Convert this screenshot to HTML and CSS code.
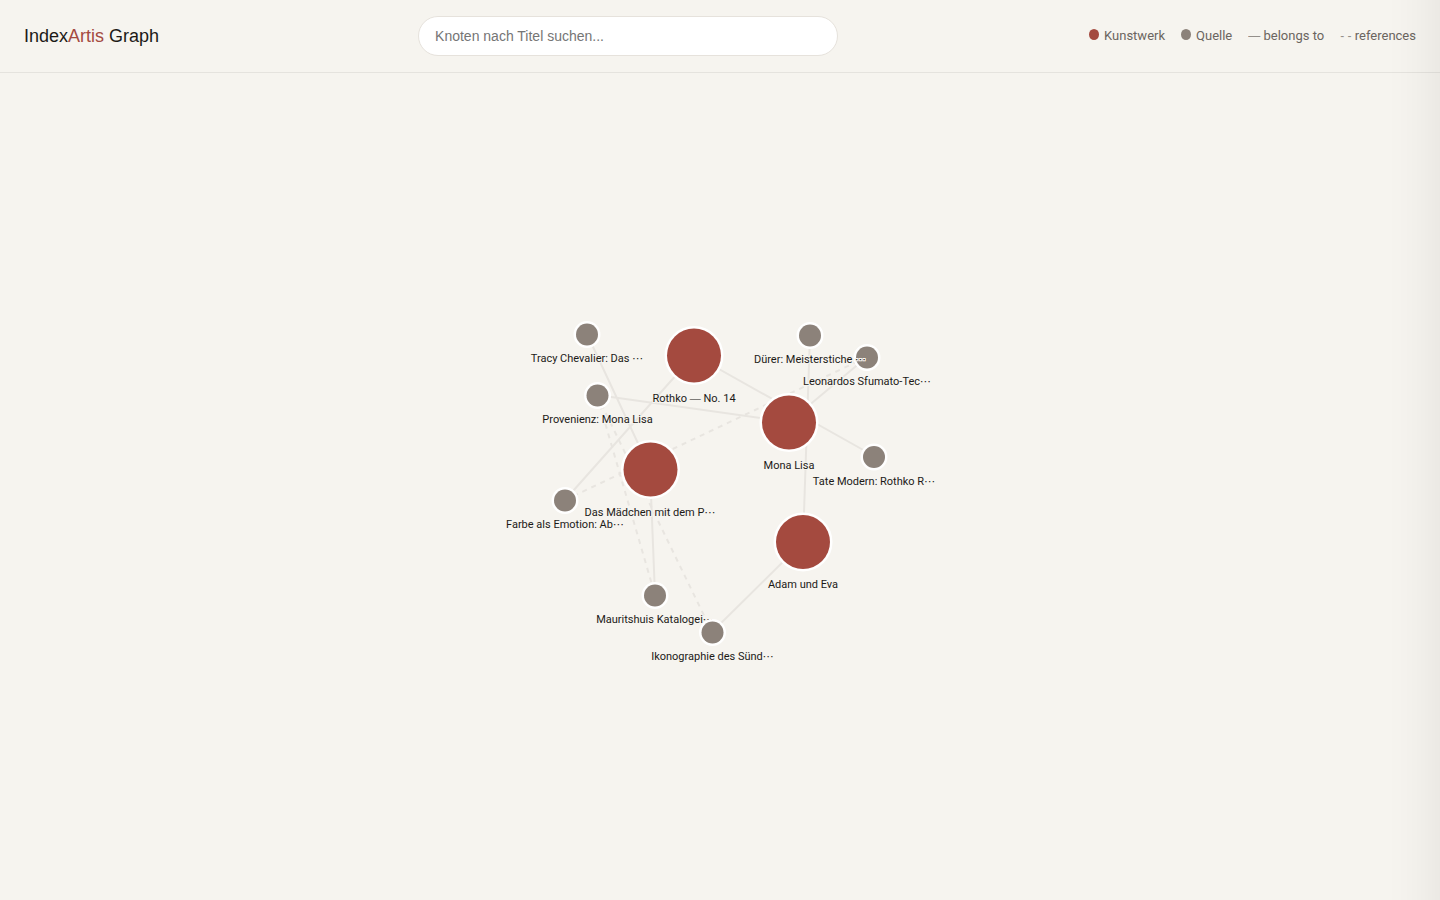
FILE: index.html
```html
<!DOCTYPE html>
<html lang="de">
<head>
<meta charset="utf-8">
<title>IndexArtis Graph</title>
<link rel="stylesheet" href="styles.css">
</head>
<body>
<header class="topbar">
  <h1 class="brand">Index<span class="brand-accent">Artis</span> Graph</h1>
  <input class="search" type="search" placeholder="Knoten nach Titel suchen..." aria-label="Knoten nach Titel suchen">
  <ul class="legend">
    <li><span class="dot dot-art"></span>Kunstwerk</li>
    <li><span class="dot dot-source"></span>Quelle</li>
    <li><span class="dash">—</span> belongs to</li>
    <li><span class="dash">- -</span> references</li>
  </ul>
</header>
<main class="stage">
  <svg class="graph" viewBox="0 73 1440 827" role="img" aria-label="Graph">
    <g class="edges">
      <path d="M587 334L650 469M597 395L789 422M694 355L565 500M694 355L874 456M810 335L803 542M867 357L789 422M803 542L712 632M650 469L655 595"/>
      <path class="dashed" d="M867 357L565 500M597 395L655 595M597 395L712 632"/>
    </g>
    <g class="node art"><circle cx="789" cy="422.500" r="27"/><text x="789" y="469">Mona Lisa</text></g>
    <g class="node art"><circle cx="650.500" cy="469.500" r="27"/><text x="650" y="516">Das Mädchen mit dem P<tspan class="more">&#8943;</tspan></text></g>
    <g class="node art"><circle cx="803" cy="542" r="27"/><text x="803" y="588">Adam und Eva</text></g>
    <g class="node art"><circle cx="694" cy="355.500" r="27"/><text x="694" y="402">Rothko <tspan class="dash">—</tspan> No. 14</text></g>
    <g class="node source"><circle cx="867" cy="357.500" r="11"/><text x="867" y="385">Leonardos Sfumato-Tec<tspan class="more">&#8943;</tspan></text></g>
    <g class="node source"><circle cx="597.500" cy="395.500" r="11"/><text x="597.500" y="423">Provenienz: Mona Lisa</text></g>
    <g class="node source"><circle cx="587" cy="334.500" r="11"/><text x="587" y="362">Tracy Chevalier: Das <tspan class="more">&#8943;</tspan></text></g>
    <g class="node source"><circle cx="655" cy="595.500" r="11"/><text x="655" y="623">Mauritshuis Katalogei<tspan class="more">&#8943;</tspan></text></g>
    <g class="node source"><circle cx="810" cy="335.500" r="11"/><text x="810" y="363">Dürer: Meisterstiche <tspan class="more">&#8943;</tspan></text></g>
    <g class="node source"><circle cx="712.500" cy="632.500" r="11"/><text x="712.500" y="660">Ikonographie des Sünd<tspan class="more">&#8943;</tspan></text></g>
    <g class="node source"><circle cx="565" cy="500.500" r="11"/><text x="565" y="528">Farbe als Emotion: Ab<tspan class="more">&#8943;</tspan></text></g>
    <g class="node source"><circle cx="874" cy="457" r="11"/><text x="874" y="485">Tate Modern: Rothko R<tspan class="more">&#8943;</tspan></text></g>
  </svg>
</main>
<aside class="drawer" aria-hidden="true"></aside>
</body>
</html>
```

FILE: styles.css
```css
* { box-sizing: border-box; }
body {
  margin: 0;
  min-height: 100vh;
  display: flex;
  flex-direction: column;
  overflow: hidden;
  background: #f6f4ef;
  color: #1c1a17;
  font-family: Roboto, "Liberation Sans", Arial, sans-serif;
}
.topbar {
  display: flex;
  align-items: center;
  justify-content: space-between;
  padding: 16px 24px;
  border-bottom: 1px solid #e5e3de;
}
.brand {
  margin: 0;
  font-family: "Liberation Sans", Arial, sans-serif;
  font-size: 18px;
  font-weight: 400;
  line-height: 24px;
}
.brand-accent { color: #a44a3f; }
.search {
  width: 420px;
  height: 40px;
  margin-left: 8px;
  padding: 0 16px;
  border: 1px solid #e6e2dc;
  border-radius: 20px;
  background: #fff;
  font: 14px "Liberation Sans", Arial, sans-serif;
  outline: none;
}
.search::placeholder { color: #757575; }
.legend {
  display: flex;
  gap: 16px;
  margin: 0;
  padding: 0;
  list-style: none;
  font-size: 13px;
  line-height: 20px;
  color: #6b6560;
}
.dash { font-family: "Liberation Sans", Arial, sans-serif; opacity: 0.7; }
.legend .dash { font-size: 12px; }
.dot {
  display: inline-block;
  width: 10px;
  height: 11px;
  margin-right: 5px;
  border-radius: 50%;
}
.dot-art { background: #a44a3f; }
.dot-source { background: #8c827a; }
.stage { flex: 1; display: flex; min-height: 0; }
.graph { width: 100%; min-height: 0; }
.edges path { fill: none; stroke: #e8e5e0; stroke-width: 2; }
.edges .dashed { stroke-dasharray: 5 5; }
.node circle { stroke: #fff; stroke-width: 5; paint-order: stroke; }
.art circle { fill: #a44a3f; }
.source circle { fill: #8c827a; }
.node text {
  font-size: 11px;
  text-anchor: middle;
  fill: #1c1a17;
  stroke: #f6f4ef;
  stroke-width: 2;
  paint-order: stroke;
}
.more { font-family: "DejaVu Sans", sans-serif; }
.drawer {
  position: fixed;
  top: -60px;
  bottom: -60px;
  left: 100%;
  width: 420px;
  background: #fff;
  box-shadow: -8px 0 48px rgba(0, 0, 0, 0.07);
}
```
